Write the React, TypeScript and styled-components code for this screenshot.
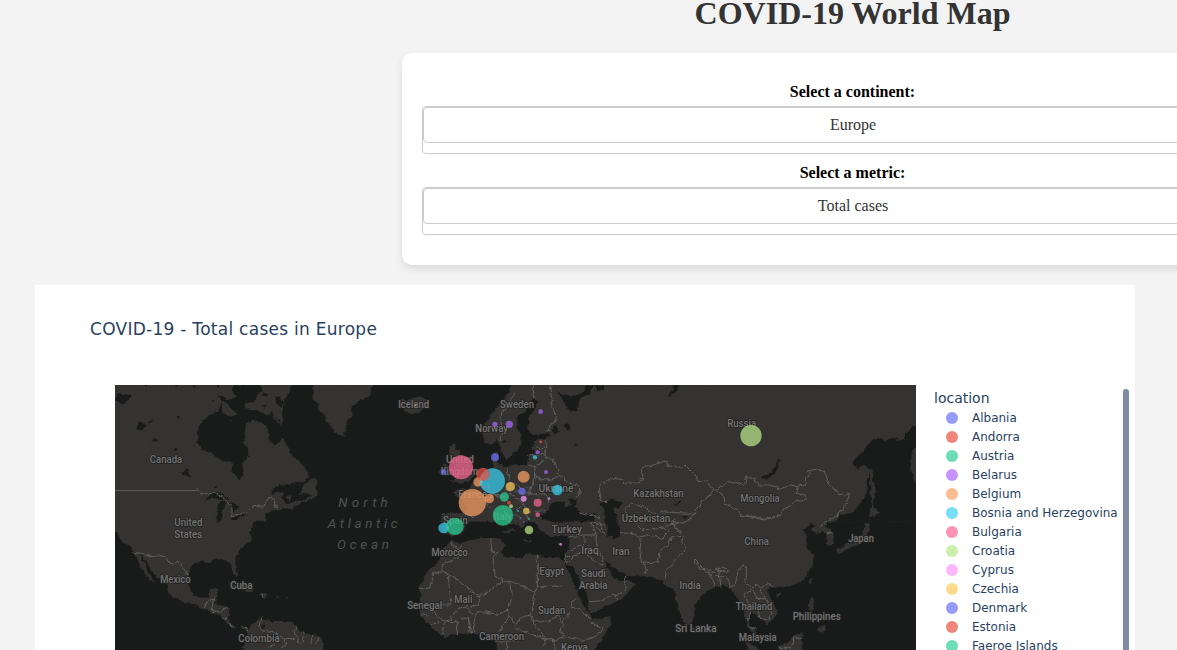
import React from "react";
import styled, { createGlobalStyle } from "styled-components";

const GlobalStyle = createGlobalStyle`
  html, body { margin: 0; padding: 0; overflow: hidden; background: #f3f3f3; }
  * { box-sizing: border-box; }
`;

const Page = styled.div`
  width: 1704px;
  height: 650px;
  overflow: hidden;
  display: flex;
  flex-direction: column;
  background: #f3f3f3;
  font-family: "Liberation Serif", "Times New Roman", serif;
`;

const Heading = styled.h1`
  margin: -6px 0 21px;
  height: 38px;
  line-height: 38px;
  padding-left: 1px;
  font-size: 32px;
  color: #333;
  text-align: center;
`;

const Controls = styled.section`
  width: 900px;
  height: 212px;
  flex: none;
  align-self: center;
  padding: 30px 20px 0;
  border-radius: 10px;
  background: #fff;
  box-shadow: 0 4px 8px rgba(0, 0, 0, 0.1);
  display: flex;
  flex-direction: column;
  gap: 10px;
`;

const Field = styled.div`
  display: flex;
  flex-direction: column;
  height: 71px;
`;

const Label = styled.label`
  height: 23px;
  line-height: 18px;
  padding-left: 1px;
  font-size: 16px;
  font-weight: bold;
  text-align: center;
  color: #000;
`;

const Select = styled.div`
  height: 48px;
  border: 1px solid #ccc;
  border-radius: 4px;
  background: #fff;
`;

const SelectControl = styled.div`
  height: 36px;
  padding-left: 2px;
  border: 1px solid #ccc;
  border-radius: 4px;
  line-height: 34px;
  font-size: 16px;
  color: #333;
  text-align: center;
`;

const Chart = styled.section`
  width: 1100px;
  height: 450px;
  flex: none;
  margin: 20px 0 0 35px;
  background: #fff;
  font-family: "DejaVu Sans", Verdana, sans-serif;
  color: #2a3f5f;
`;

const ChartTitle = styled.h2`
  margin: 0;
  height: 100px;
  padding: 34px 0 0 55px;
  font-size: 17px;
  font-weight: normal;
  letter-spacing: 0.27px;
  line-height: 20px;
`;

const ChartBody = styled.div`
  display: flex;
  padding-left: 80px;
`;

const MapCanvas = styled.svg`
  width: 801px;
  height: 265px;
  flex: none;
  display: block;
  background: #191b1a;
`;

const Legend = styled.div`
  width: 189px;
  margin: 3px 0 0 18px;
  display: flex;
  flex-direction: column;
`;

const LegendTitle = styled.div`
  height: 20px;
  line-height: 20px;
  font-size: 14px;
`;

const LegendItem = styled.div`
  height: 19px;
  display: flex;
  align-items: center;
  padding-left: 12px;
  gap: 14px;
  font-size: 12px;
  white-space: nowrap;
`;

const Dot = styled.span<{ $color: string }>`
  width: 12px;
  height: 12px;
  border-radius: 50%;
  opacity: 0.7;
  background: ${(p) => p.$color};
`;

const Scrollbar = styled.div`
  width: 6px;
  height: 300px;
  margin-top: 4px;
  border-radius: 3px;
  background: #808ba4;
`;

const Place = styled.text`
  font-family: Roboto, "Liberation Sans", sans-serif;
  font-size: 30px;
  font-weight: 500;
  fill: #747474;
  stroke: #222221;
  stroke-width: 5px;
  stroke-linejoin: round;
  paint-order: stroke;
  text-anchor: middle;
`;

const Sea = styled.text`
  font-family: Roboto, "Liberation Sans", sans-serif;
  font-size: 40px;
  font-style: italic;
  fill: #505251;
  text-anchor: middle;
`;

const BLUE = "#6a70f8";
const RED = "#ea5143";
const GREEN = "#2dce96";
const PURPLE = "#ab66f8";
const ORANGE = "#f9a162";
const CYAN = "#3ad0f0";
const PINK = "#f96694";
const LIME = "#b9e887";
const MAGENTA = "#fd97fd";
const YELLOW = "#fbca5a";

const legend: [string, string][] = [
  ["Albania", BLUE],
  ["Andorra", RED],
  ["Austria", GREEN],
  ["Belarus", PURPLE],
  ["Belgium", ORANGE],
  ["Bosnia and Herzegovina", CYAN],
  ["Bulgaria", PINK],
  ["Croatia", LIME],
  ["Cyprus", MAGENTA],
  ["Czechia", YELLOW],
  ["Denmark", BLUE],
  ["Estonia", RED],
  ["Faeroe Islands", GREEN],
];

interface Tile {
  x: number;
  y: number;
  land?: string;
  water?: string;
  islands?: string;
  borders?: string;
}

// The map is split in tiles of 600 x 390 units; three units make one pixel.
const tiles: Tile[] = [
  {
    x: 0,
    y: 0,
    land: "M0,0H530L524,20 508,45 502,80 500,150 515,180 535,215 560,235 578,262 580,275 560,290 530,298 490,300 465,325 490,318 508,320 500,340 515,355 540,350 560,345 600,330 600,340 560,352 530,372 505,370 480,375 455,385 450,410H0Z M565,300 585,285 604,280V335L575,325 555,330Z",
    water:
      "M310,30 320,50 310,80 290,85 260,110 246,140 248,170 265,195 290,205 320,225 350,232 352,260 372,283 385,275 382,235 400,215 400,190 385,175 390,150 392,115 410,105 440,110 460,135 460,165 480,180 498,165 504,145 500,122 470,82 450,92 430,75 395,70 390,55 420,55 425,30 440,15 435,0H355L350,15 365,35 340,45 325,35Z M0,45 10,25 50,30 40,45 25,58 5,50Z M62,135 75,110 95,120 80,138Z M95,115 115,100 110,112Z M182,95 192,90 195,102Z M108,175 118,160 133,165 118,170Z M176,200 185,185 188,195Z M195,262 215,250 228,277 215,272Z M293,305 300,300 305,308Z M270,345 290,325 320,325 345,345 320,345 300,340Z M305,410 307,365 315,350 335,352 325,370 318,410Z M340,350 350,352 375,365 360,375 355,388Z M345,405 375,388 400,378 385,392Z M475,35 492,35 505,50 500,70 485,55Z M468,85 498,112 490,116Z M445,20 460,25 455,35 445,32Z M440,62 452,58 450,68Z M290,42 300,45 295,52Z M230,0H243L238,12Z M305,0H318L312,10Z M80,0H100L90,4Z M175,0H190L182,5Z",
    islands: "M322,45 365,88 345,95 335,90 320,78Z M343,102 352,104 347,110Z M510,335 530,330 525,348Z",
    borders:
      "M245,310L250,318 268,325 300,325 330,340 350,365 352,395 380,385 400,380 415,365 450,362 460,340 472,335 480,360 487,370",
  },
  {
    x: 0,
    y: 390,
    land: "M0,0H450L440,12 415,22 405,50 408,80 385,95 362,125 360,150 370,180 362,182 350,160 345,140 320,132 295,135 285,145 265,138 240,145 225,160 222,180 218,205 235,240 262,250 280,245 285,225 312,220 308,245 300,268 340,275 342,310 350,330 370,340 385,330 400,345 395,352 378,337 350,340 330,317 310,297 290,292 265,282 240,267 215,267 160,235 155,210 120,180 100,150 80,118 75,122 90,150 105,185 120,202 105,200 85,170 70,140 60,115 50,100 20,75 0,45Z M400,410 380,400 395,370 400,345 415,325 440,305 450,315 490,318 530,320 545,340 570,355 604,360V410Z M340,208 350,204 385,215 420,229 400,231 375,220Z M433,236 450,235 465,243 445,249Z M483,246H492V249H483Z M515,246h4v6h-4z",
    water: "M345,12 372,0 384,2 360,16Z M305,0H320L312,12Z M438,328 450,325 450,338 442,338Z",
    borders:
      "M55,112 78,115 105,125 135,122 150,125 165,145 172,147 190,138 205,160 215,175 225,180 M268,280 272,262 280,255 295,250 300,245 M295,250 293,268 290,285 300,290 315,290 330,280 345,278 M325,310H340 M345,325l5,12 M390,335l8,14 M445,303 435,320 432,335 445,348 480,355 510,372 525,370 540,375 M545,335l-8,15 8,20 10,20 8,-5 5,-25 -2,-10 M510,372l5,15 -20,15 M590,360v25 M460,398l20,-8 M442,236v12",
  },
  {
    x: 600,
    y: 0,
    land: "M-4,0H175L165,25 150,40 130,48 110,65 108,90 95,120 85,153 72,150 50,130 35,105 10,70 12,55 -4,45Z M255,50 262,40 270,46 285,42 310,35 330,40 340,60 320,78 292,88 268,80 272,68 256,62Z M400,185 420,178 425,195 440,195 430,215 450,225 475,250 480,270 465,285 430,295 405,290 425,280 400,260 415,240 405,215Z M378,250 390,235 403,245 398,265 378,272Z M604,0H592L565,45 540,75 505,120 502,150 508,175 530,182 545,165 552,175 560,200 575,225 585,215 604,205Z M604,240 575,247 560,240 548,240 550,215 545,196 533,205 533,245 530,257 500,270 480,290 460,310 430,312 415,322 440,340 455,365 450,385 380,386 378,410H604Z",
    water: "M560,170l12,-8 6,8 -12,8z",
    borders:
      "M600,20 590,45 575,70 560,80 558,110 562,135 555,165 M575,247 580,270 585,300 570,320 M500,272 520,300 530,330 515,350 525,372 M445,388 480,400 M530,330l40,5 M575,325l25,8",
  },
  {
    x: 600,
    y: 390,
    land: "M378,-6 386,30 380,50 395,55 410,65 430,60 447,45 455,20 475,5 500,-2 530,-5 545,10 570,35 598,50 604,40V-6Z M604,130 565,125 555,110 570,95 555,70 520,68 470,72 430,88 410,75 395,90 375,115 370,140 340,165 325,190 310,218 318,245 312,275 312,300 345,335 390,365 430,355 480,355 520,360 540,380 545,410H604Z M-4,360 8,362 22,375 25,410H-4Z",
    water: "M530,-5 560,5 585,28 604,30V45L575,38 548,18Z",
    islands: "M518,-4h8v26h-8z M562,45l25,0 -6,12z",
    borders:
      "M405,75l5,15 15,5 12,20 -10,15 -20,8 -25,12 -2,15V175H352V205H343V220H310 M382,165 490,240V270L430,280 412,300 405,315 385,318 M400,185 408,270H320 M400,185H412 M490,240H505L565,198 540,180 535,140 538,120 530,100 527,70 M540,122l10,-12 M438,90v20 M565,198 600,205 M585,205 590,250 578,285 580,300 M480,300 495,290 515,292 550,298 578,285 M480,300 475,352 M578,300 560,345 545,355 M320,280H345L360,300 385,318 M345,300H318 M345,335l12,-15 15,5 M388,320l-5,30 7,15 M405,320h25l-3,38 M435,310h25l5,40 M460,310l10,42 M455,280l20,20 M540,378h60 M575,378v25 M580,300l20,25 M0,390l12,-20",
  },
  {
    x: 1200,
    y: 0,
    land: "M-4,0H604V410H-4Z",
    water:
      "M45,45 70,45 60,75 40,100 40,135 55,150 100,145 108,150 90,160 60,165 50,185 60,200 40,215 35,240H-4V205L12,190 20,150 5,130 5,100 30,80 40,60Z M130,20 170,35 200,25 215,0H235L225,25 195,40 185,75 165,80 150,55Z M240,0H270L265,18 245,20Z M455,30 470,18 480,0H495L485,20 465,35Z M110,135 125,122 135,140 120,150Z M148,118 160,115 168,130 158,137Z M178,175 188,180 180,183Z M480,360 495,342 498,350 485,362Z M90,410 95,375 120,350 150,350 148,365 170,358 160,345 188,340 180,365 200,392 240,400V410Z M255,355 290,345 325,352 310,370 295,370 300,395 310,410H275L268,380Z M505,392l15,0 0,5 -15,0z",
    borders:
      "M55,0V40 M110,0 105,15 112,40 110,60 125,100 95,140 M90,165l5,20 -5,30 M65,185l15,8 12,-5 M37,212H65L85,205 92,215 115,225 122,245 132,255 125,270 145,275 150,285 165,295 190,300 197,315 192,330 180,345 M40,240 60,245 80,235 82,220 M60,245 58,275 52,300 45,320 48,330 M58,275 90,285 130,278 M45,325 70,330 90,325 100,340 102,355 M0,300 20,308 45,305 M0,320 45,325 M0,340 20,350 45,328 M20,350 40,380 90,377 M0,370 20,365 M30,385 40,402 M0,385 20,400 M258,345 253,315 262,295 290,280 320,283 328,292 375,290 372,280 385,283 378,250 400,242 425,238 445,227 460,235 465,245 480,240 500,248 510,240 545,275 550,290 575,288 585,305 598,310 582,335 560,345 555,365 540,370 543,390 520,385 440,380 430,390 410,383 385,365 350,358 332,365 335,400 M258,345l15,5 M195,385l40,8 20,8",
  },
  {
    x: 1200,
    y: 390,
    land: "M-4,-6H604V210L560,240 540,270 535,315 522,330 512,328 500,310 485,260 475,222 450,212 445,197 420,192 385,182 335,180 328,195 345,200 362,208 340,235 300,262 260,280 225,297 220,262 215,235 195,200 175,160 150,145 150,125 160,100 165,68 150,62 110,67 80,52 70,30 50,20 30,25 20,40 8,30 -4,15Z M-4,130 25,130 30,115 60,120 90,128 130,128 150,135 150,150 165,175 185,225 210,280 225,300 232,315 290,305 285,330 265,365 235,410H-4Z",
    water:
      "M268,140 285,145 310,170 330,175 335,185 318,200 298,190 280,165Z M275,-4H308L302,15 315,35 315,60 295,70 275,60 280,35 270,15Z M75,-4H245L235,12 200,18 150,12 100,18 80,14Z",
    islands: "M130,84h14v7h-14z M25,75h25v5h-25z M528,335l12,5 2,15 -10,0z",
    borders:
      "M155,70 165,65 205,60 240,60 235,40 225,15 M230,20l20,10 20,0 M240,35l30,20 M250,20l15,25 M67,122V214H140 M67,214 60,232 M0,203 60,232 55,270 45,300 55,320 100,318 135,300 140,320 M45,300 15,310 0,340 40,355 90,370 115,375 150,365 135,345 150,310 170,280 175,255 185,250 M55,320l20,30 15,20 M170,280l30,5 20,25 M212,300l12,12 M230,325 265,338 235,370 200,375 150,365 M115,375l5,25 M90,370l-5,30 M150,115l5,30 25,-25 25,-12 35,35 25,5 M152,125h14 M240,60 245,85 250,110 268,140 M165,105 205,90 210,65 M222,260 255,258 300,240 330,230 328,180 M300,240l8,22 M315,55 345,55 378,70 375,110 380,145 395,155 390,180 M378,65 400,60 440,70 460,50 440,35 M380,145 430,140 435,110 460,90 470,65 495,65 M450,190l5,-25 25,-25 20,-25 15,-15 -15,-20 5,-15 M540,135l25,25 39,10 M540,135l-2,12 35,25 31,0 M340,0l40,45 60,-8 35,-7 20,25 M440,20l20,10 30,-5 M480,10l-10,20 30,20 M540,0l-40,25 -40,-10 M580,170l20,45",
  },
  {
    x: 1800,
    y: 0,
    land: "M-4,0H606V410H-4Z",
    water:
      "M606,115 590,130 575,140 570,160 550,168 540,155 520,165 475,162 450,190 408,235 430,252 445,240 465,255 455,290 455,325 440,350 410,385 370,390 360,410H606Z M140,278 165,265 185,240 185,220 195,222 190,245 175,270 155,282Z",
    islands:
      "M606,190 590,200 587,250 598,290 606,295Z M465,250 475,265 472,285 482,310 475,340 478,365 468,345 466,300Z M465,375 475,365 495,380 480,395 462,395Z",
    borders:
      "M0,315 18,303 42,290 62,295 88,300 95,275 120,283 130,300 165,300 195,312 225,300 250,302 245,325 268,330 278,342 240,348 230,362 210,370 195,390 150,403 120,395 78,390 65,372 30,360 28,335 0,315 M250,302 272,300 275,280 285,265 280,258 305,253 328,260 345,305 365,315 372,330 405,322 400,345 388,360 385,375 370,380 368,400",
  },
  {
    x: 1800,
    y: 390,
    land: "M-4,-6H372L372,4 340,18 330,35 350,45 358,65 357,90 335,92 335,60 322,48 300,62 275,66 272,75 280,100 295,125 292,155 265,195 240,208 195,220 165,215 155,225 175,265 187,290 180,310 155,328 140,315 125,300 105,290 100,320 120,350 140,380 125,370 100,335 90,300 85,270 60,245 45,220 30,210 -4,215Z M183,240 198,232 200,240 190,246Z M283,205 287,185 295,192 288,210Z M280,285 285,250 297,248 298,270 290,287Z M305,345 330,328 332,345 320,353Z M190,395V410H260L262,370 265,352 245,358 225,380Z M90,378 110,388 140,410H105Z M450,20 460,25 465,45 452,65 440,85 400,100 370,122 365,105 385,92 430,75 445,50Z M448,-4H480L470,8 455,8Z",
    water: "M258,45 275,40 290,25 298,30 287,48 305,52 300,64 272,66 275,50Z",
    borders:
      "M75,0 120,8 150,15 200,0 M372,0 350,10 340,18 315,35 M88,150l8,20 -8,30 25,20 10,-10 M88,150l-20,20 0,15 -8,25 -15,10 -10,-30 M120,210l20,10 20,-15 15,12 M113,220l-25,20 10,20 10,30 -10,30 M115,225l10,25 25,0 15,20 5,30 -15,15 -20,-5 -5,-25 M135,220l5,15 25,30 M0,160h35l5,10 -40,0 M0,185h35 M10,160l8,55 M335,55h18 M190,397l35,0 15,-30 M245,370h18 M105,335l20,10",
  },
];

const places: [string, number, number, number][] = [
  ["Canada", 153, 233, 97],
  ["United", 220, 422, 84],
  ["States", 220, 458, 84],
  ["Mexico", 181, 595, 91],
  ["Cuba", 379, 613, 67],
  ["Colombia", 432, 772, 124],
  ["Iceland", 896, 69, 93],
  ["Norway", 1130, 140, 98],
  ["Sweden", 1206, 70, 102],
  ["United", 1035, 233, 84],
  ["Kingdom", 1033, 271, 112],
  ["France", 1073, 340, 86],
  ["Spain", 1021, 418, 74],
  ["Italy", 1163, 405, 55],
  ["Morocco", 1004, 513, 109],
  ["Mali", 1045, 654, 54],
  ["Senegal", 929, 673, 105],
  ["Cameroon", 1160, 764, 135],
  ["Ukraine", 1323, 320, 105],
  ["Kazakhstan", 1630, 335, 151],
  ["Uzbekistan", 1593, 412, 146],
  ["Turkey", 1355, 443, 91],
  ["Iraq", 1425, 506, 52],
  ["Iran", 1518, 510, 53],
  ["Egypt", 1310, 571, 74],
  ["Saudi", 1435, 575, 74],
  ["Arabia", 1435, 611, 86],
  ["India", 1725, 611, 64],
  ["Sudan", 1310, 686, 82],
  ["Sri Lanka", 1743, 740, 124],
  ["Kenya", 1378, 797, 80],
  ["Russia", 1880, 126, 87],
  ["Mongolia", 1935, 352, 118],
  ["China", 1925, 481, 74],
  ["Japan", 2238, 472, 77],
  ["Thailand", 1917, 674, 110],
  ["Philippines", 2105, 704, 144],
  ["Malaysia", 1928, 767, 113],
];

const seas: [string, number, number, number][] = [
  ["North", 744, 366, 148],
  ["Atlantic", 743, 430, 209],
  ["Ocean", 744, 492, 156],
];

const bubbles: [number, number, number, string][] = [
  [1226, 411, 2.5, BLUE],
  [1168, 336, 14, GREEN],
  [1293, 261, 6, PURPLE],
  [1089, 291, 14, ORANGE],
  [1209, 378, 3, CYAN],
  [1268, 389, 7, PINK],
  [1188, 364, 6, LIME],
  [1337, 478, 4, MAGENTA],
  [1186, 305, 14, YELLOW],
  [1140, 217, 12, BLUE],
  [1277, 170, 4.5, RED],
  [1277, 80, 7, PURPLE],
  [1072, 353, 41, ORANGE],
  [1132, 288, 38, CYAN],
  [1242, 435, 13, LIME],
  [1226, 341, 9, MAGENTA],
  [901, 61, 2.5, YELLOW],
  [986, 261, 8, BLUE],
  [1164, 391, 31, GREEN],
  [1268, 202, 6, PURPLE],
  [1260, 217, 6.5, CYAN],
  [1108, 305, 3, PINK],
  [1302, 341, 4, MAGENTA],
  [1217, 400, 2.5, BLUE],
  [1104, 268, 20, RED],
  [1242, 402, 3, GREEN],
  [1140, 118, 8, PURPLE],
  [1226, 275, 18, ORANGE],
  [986, 429, 16, CYAN],
  [1268, 353, 12, PINK],
  [1908, 152, 32, LIME],
  [1234, 378, 10, YELLOW],
  [1221, 319, 11, BLUE],
  [1182, 353, 6, RED],
  [1020, 424, 26, GREEN],
  [1183, 118, 11, PURPLE],
  [1123, 341, 14, ORANGE],
  [1327, 315, 16, CYAN],
  [1038, 247, 36, PINK],
];

function WorldMap() {
  return (
    <MapCanvas viewBox="0 0 2403 795">
      <defs>
        <filter
          id="coast"
          filterUnits="userSpaceOnUse"
          x="0"
          y="0"
          width="2403"
          height="800"
          colorInterpolationFilters="sRGB"
        >
          <feTurbulence type="fractalNoise" baseFrequency="0.06" numOctaves="3" seed="4" />
          <feDisplacementMap in="SourceGraphic" scale="14" xChannelSelector="R" yChannelSelector="G" />
        </filter>
      </defs>
      <g filter="url(#coast)">
        <rect x="-20" y="-20" width="2440" height="840" fill="#191b1a" />
        <g fill="#343332">
          {tiles.map((t) => (
            <path key={`${t.x}-${t.y}`} transform={`translate(${t.x} ${t.y})`} d={t.land} />
          ))}
          <path d="M-20,-20H530V4H-20Z M600,-20H775V2H600Z M1190,-20H2430V4H1190Z M-20,0H3V435H-20Z M2400,0H2430V115H2400Z" />
        </g>
        {tiles.map((t) => (
          <g key={`${t.x}-${t.y}`} transform={`translate(${t.x} ${t.y})`}>
            <path d={t.water} fill="#191b1a" />
            <path d={t.islands} fill="#343332" />
          </g>
        ))}
        <g fill="none" stroke="#626261" strokeWidth="2.8" strokeLinejoin="round">
          {tiles.map((t) => (
            <path key={`${t.x}-${t.y}`} transform={`translate(${t.x} ${t.y})`} d={t.borders} />
          ))}
        </g>
      </g>
      <path d="M0,316.5H246" stroke="#5a5a59" strokeWidth="3" />
      {seas.map(([name, x, y, w]) => (
        <Sea key={name} x={x} y={y} textLength={w}>
          {name}
        </Sea>
      ))}
      {places.map(([name, x, y, w]) => (
        <Place key={`${name}${x}`} x={x} y={y} textLength={w} lengthAdjust="spacingAndGlyphs">
          {name}
        </Place>
      ))}
      {bubbles.map(([x, y, r, color], i) => (
        <circle key={i} cx={x} cy={y} r={r} fill={color} fillOpacity="0.72" />
      ))}
    </MapCanvas>
  );
}

export default function App() {
  return (
    <Page>
      <GlobalStyle />
      <Heading>COVID-19 World Map</Heading>
      <Controls>
        <Field>
          <Label>Select a continent:</Label>
          <Select>
            <SelectControl>Europe</SelectControl>
          </Select>
        </Field>
        <Field>
          <Label>Select a metric:</Label>
          <Select>
            <SelectControl>Total cases</SelectControl>
          </Select>
        </Field>
      </Controls>
      <Chart>
        <ChartTitle>COVID-19 - Total cases in Europe</ChartTitle>
        <ChartBody>
          <WorldMap />
          <Legend>
            <LegendTitle>location</LegendTitle>
            {legend.map(([name, color]) => (
              <LegendItem key={name}>
                <Dot $color={color} />
                {name}
              </LegendItem>
            ))}
          </Legend>
          <Scrollbar />
        </ChartBody>
      </Chart>
    </Page>
  );
}
